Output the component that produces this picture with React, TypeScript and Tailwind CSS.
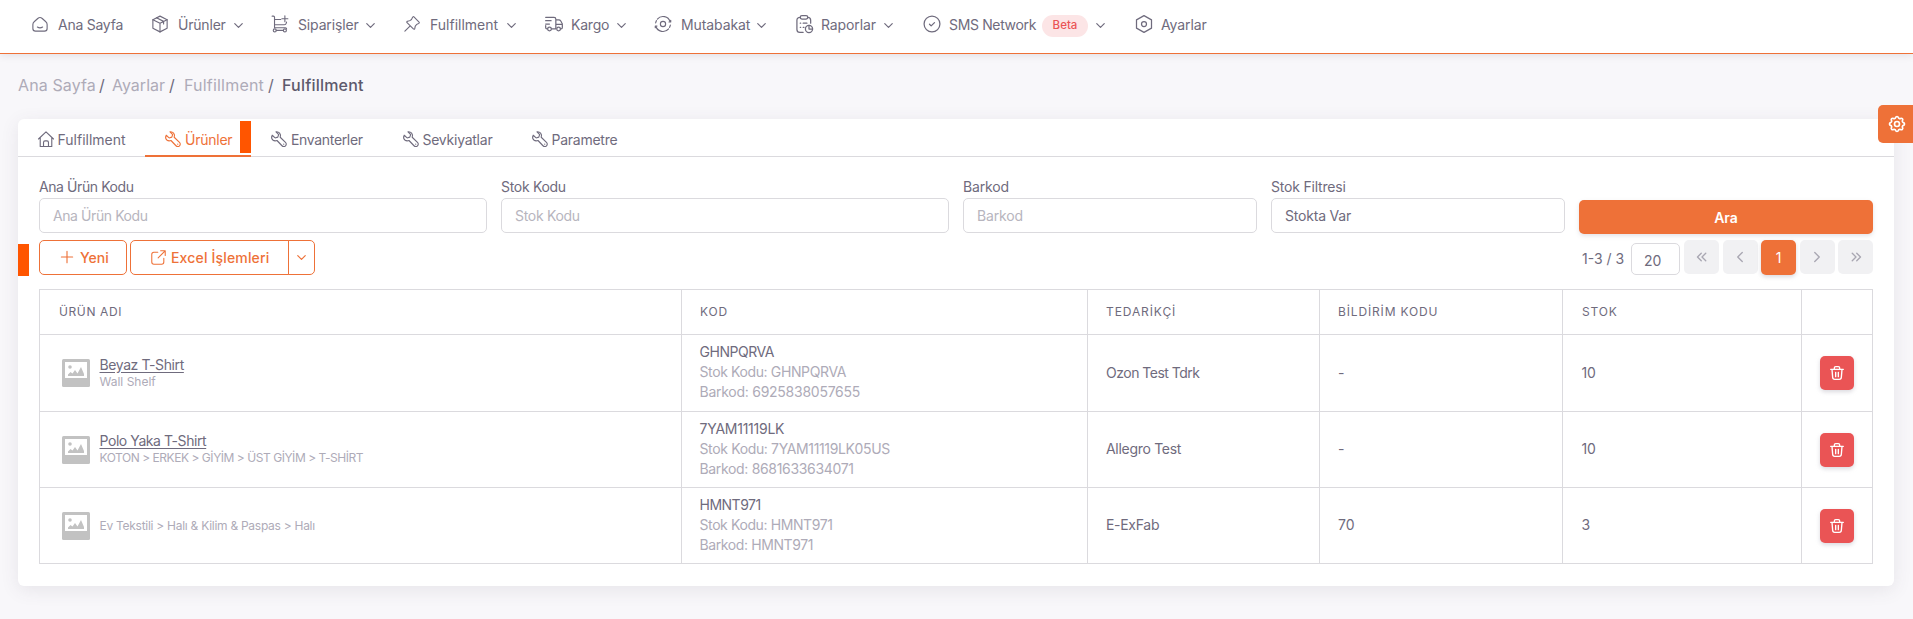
import React from 'react';

type IconProps = { className?: string };

function Svg({ className, size = 18, children, width = 1.5 }: { className?: string; size?: number; width?: number; children: React.ReactNode }) {
  return (
    <svg
      className={className}
      width={size}
      height={size}
      viewBox="0 0 24 24"
      fill="none"
      stroke="currentColor"
      strokeWidth={width}
      strokeLinecap="round"
      strokeLinejoin="round"
    >
      {children}
    </svg>
  );
}

const HomeSmile = () => (
  <Svg>
    <path d="M2.500 12.600c0-1.500.5-2.600 1.700-3.600l4.800-4.300c1.800-1.600 4.200-1.600 6 0l4.800 4.300c1.200 1 1.700 2.100 1.700 3.600v5.400c0 2.400-1.100 3.500-3.500 3.500H6c-2.400 0-3.500-1.100-3.500-3.500z" />
    <path d="M8.500 16c2 1.300 5 1.300 7 0" />
  </Svg>
);
const Box = () => (
  <Svg>
    <path d="M12 1.500l9.500 4.700v11.600L12 22.500l-9.500-4.700V6.200z" />
    <path d="M2.500 6.200L12 11l9.500-4.800M12 11v11.500M7.300 3.800l9.500 4.700v3.500" />
  </Svg>
);
const CartPlus = () => (
  <Svg>
    <path d="M1.500 1.500h1.700c1 0 1.500.5 1.500 1.500v14M4.700 6H13M4.700 13h13c1.500 0 2.300-.6 2.600-2l.4-1.500M4.700 17h14.500c1 0 1.600.5 1.600 1.500M18.500 1v8M14.500 5h8" />
    <circle cx="5" cy="20.500" r="2" />
    <circle cx="18.500" cy="20.500" r="2" />
    <path d="M7 20.500h9.500" />
  </Svg>
);
const Pin = () => (
  <Svg>
    <path d="M14.600 2.600l6.800 6.800c.7.700.3 1.600-.6 1.900-2 .5-3.300 1.600-4.300 3.500-.7 1.300-.4 2.500-1 3.700-.4.700-1.100.7-1.700.1L5.400 10.200c-.6-.6-.6-1.300.1-1.700 1.200-.6 2.400-.3 3.700-1 1.900-1 3-2.300 3.500-4.300.3-.9 1.200-1.300 1.900-.6zM9.300 14.700L2.500 21.500" />
  </Svg>
);
const Truck = () => (
  <Svg size={20}>
    <path d="M2 4h10c1.500 0 2.200.7 2.200 2.200v11.600H9M2 8h6.500M2 12h4.500M2 14v2.200c0 1 .6 1.600 1.500 1.600h.8M14.200 7h3.600c1 0 1.600.3 2.100 1.100l1.600 2.700c.4.600.5 1.100.5 1.800v3.600c0 1-.5 1.600-1.500 1.600h-.8M14.200 12.500h7.600" />
    <circle cx="6.600" cy="18" r="2.200" />
    <circle cx="17.500" cy="18" r="2.200" />
  </Svg>
);
const Cycle = () => (
  <Svg>
    <circle cx="12" cy="12" r="3.500" />
    <path d="M4.500 5.500a9.900 9.900 0 0 1 17 3.500M19.500 18.500A9.900 9.900 0 0 1 2.500 15M2.200 10.500a9.900 9.900 0 0 1 1.100-3M21.800 13.500a9.900 9.900 0 0 1-1.100 3M22.300 7v2.300H20M1.700 17v-2.300H4" />
  </Svg>
);
const Report = () => (
  <Svg size={20}>
    <path d="M7.500 4C4.500 4 3.500 5 3.500 7.500v11C3.500 21 4.500 22 7 22h4M16.500 4c2.500 0 3.500 1 3.500 3.500V11" />
    <rect x="7.500" y="2" width="9" height="4" rx="2" />
    <path d="M7.500 11H8M11 11h4.500M7.500 16H8M11 16h1" />
    <circle cx="18" cy="18" r="4.300" />
    <path d="M18 13.700V18h4.300" />
  </Svg>
);
const CheckCircle = () => (
  <Svg size={20}>
    <circle cx="12" cy="12" r="9.500" />
    <path d="M9 12.300l2 2 4-4" />
  </Svg>
);
const HexSetting = () => (
  <Svg size={20}>
    <path d="M12 2l9 5v10l-9 5-9-5V7z" />
    <circle cx="12" cy="12" r="3" />
  </Svg>
);
const House = () => (
  <Svg width={1.500}>
    <path d="M2 12L12 2.500 22 12M4.300 10v12h15.400V10M8.700 22v-5.500c0-1.300.7-2 2-2h2.600c1.300 0 2 .7 2 2V22" />
  </Svg>
);
const Wrench = () => (
  <Svg width={1.500}>
    <path d="M8 2.400L11 5.500c.4.400.5.800.3 1.400l-.9 2.600-2.600.9c-.6.2-1 .1-1.400-.3L3 7C1.500 9.800 2.300 12 3.800 13.300c1.700 1.400 3.800 1.400 5.500.700l6.700 7c1.300 1.400 3.400 1.400 4.700.1 1.300-1.300 1.300-3.400-.1-4.700l-7-6.700c.7-1.900.5-3.900-.8-5.500C11.500 2.700 9.700 2.200 8 2.400z" />
    <path d="M18.300 18.800v.1" />
  </Svg>
);
const External = () => (
  <Svg size={17}>
    <path d="M11 4.500H5.500C3.500 4.500 2.500 5.500 2.500 7.500v11c0 2 1 3 3 3h11c2 0 3-1 3-3V13M15 2.500h6.500V9M21 3l-9.500 9.500" />
  </Svg>
);
const Gear = () => (
  <Svg size={20} width={2}>
    <path d="M10.325 4.317c.426 -1.756 2.924 -1.756 3.350 0a1.724 1.724 0 0 0 2.573 1.066c1.543 -.94 3.310 .826 2.370 2.370a1.724 1.724 0 0 0 1.065 2.572c1.756 .426 1.756 2.924 0 3.350a1.724 1.724 0 0 0 -1.066 2.573c.94 1.543 -.826 3.310 -2.370 2.370a1.724 1.724 0 0 0 -2.572 1.065c-.426 1.756 -2.924 1.756 -3.350 0a1.724 1.724 0 0 0 -2.573 -1.066c-1.543 .94 -3.310 -.826 -2.370 -2.370a1.724 1.724 0 0 0 -1.065 -2.572c-1.756 -.426 -1.756 -2.924 0 -3.350a1.724 1.724 0 0 0 1.066 -2.573c-.94 -1.543 .826 -3.310 2.370 -2.370c1 .608 2.296 .07 2.572 -1.065z" />
    <circle cx="12" cy="12" r="3" />
  </Svg>
);
const Trash = () => (
  <Svg size={16} width={2}>
    <path d="M2.500 6.500h19M4.500 6.500l1 12c.1 2 1.200 3 3 3h7c1.800 0 2.900-1 3-3l1-12M8 6V4.500C8 3.300 8.700 2.500 10 2.500h4c1.300 0 2 .8 2 2V6M10 11v6.500M14 11v6.500" />
  </Svg>
);
const Down = ({ className }: IconProps) => (
  <Svg size={15} width={1.900} className={className}>
    <path d="M6 9l6 6 6-6" />
  </Svg>
);
const Placeholder = () => (
  <svg width="28" height="28" viewBox="0 0 28 28" fill="none">
    <rect width="28" height="28" rx="1.500" fill="#c2c2c2" />
    <rect x="3" y="3" width="22" height="16" fill="#fff" />
    <circle cx="8" cy="8" r="1.800" fill="#c2c2c2" />
    <path d="M6 17v-1.500L8.500 13l2 1.500L13 11l2.500 3.500L19 8l3 7v2z" fill="#c2c2c2" />
  </svg>
);

const navItems = [
  { label: 'Ana Sayfa', icon: <HomeSmile />, box: 'w-[120px]', text: 'w-[62px] tracking-[-0.25px]', down: false },
  { label: 'Ürünler', icon: <Box />, box: 'w-[120px]', text: 'w-[53px] tracking-[-0.2px]', down: true },
  { label: 'Siparişler', icon: <CartPlus />, box: 'w-[132px]', text: 'w-[65px] tracking-[-0.15px]', down: true },
  { label: 'Fulfillment', icon: <Pin />, box: 'w-[141px]', text: 'w-[74px]', down: true },
  { label: 'Kargo', icon: <Truck />, box: 'w-[110px]', text: 'w-[43px] tracking-[-0.2px]', down: true },
  { label: 'Mutabakat', icon: <Cycle />, box: 'w-[140px]', text: 'w-[73px] tracking-[-0.1px]', down: true },
  { label: 'Raporlar', icon: <Report />, box: 'w-[128px]', text: 'w-[60px] tracking-[-0.1px]', down: true },
  { label: 'SMS Network', icon: <CheckCircle />, box: 'w-[212px]', text: 'w-[93px] tracking-[-0.35px]', down: true, badge: 'Beta' },
  { label: 'Ayarlar', icon: <HexSetting />, box: 'w-[80px]', text: 'w-[50px] tracking-[-0.1px]', down: false },
];

const tabs = [
  { label: 'Fulfillment', icon: <House />, cls: 'w-[127px] pl-[18.5px]', active: false },
  { label: 'Ürünler', icon: <Wrench />, cls: 'w-[106px] pl-[19px] text-[#ee7138] border-b-2 border-[#ee7138] tracking-[-0.25px]', active: true },
  { label: 'Envanterler', icon: <Wrench />, cls: 'w-[132px] pl-[19px] tracking-[-0.33px]', active: false },
  { label: 'Sevkiyatlar', icon: <Wrench />, cls: 'w-[129px] pl-[18.500px] tracking-[-0.25px]', active: false },
  { label: 'Parametre', icon: <Wrench />, cls: 'w-[120px] pl-[18.500px] tracking-[-0.25px]', active: false },
];

const rows = [
  {
    name: 'Beyaz T-Shirt', nameCls: 'tracking-[-0.4px]', cat: 'Wall Shelf', catCls: '',
    code: 'GHNPQRVA', codeCls: 'tracking-[-0.45px]', stock: 'GHNPQRVA', stockCls: 'tracking-[-0.38px]', barcode: '6925838057655', barCls: 'tracking-[-0.26px]',
    supplier: 'Ozon Test Tdrk', supCls: 'tracking-[-0.5px]', notify: '-', qty: '10', h: 'h-[77px]',
  },
  {
    name: 'Polo Yaka T-Shirt', nameCls: 'tracking-[-0.43px]', cat: 'KOTON > ERKEK > GİYİM > ÜST GİYİM > T-SHİRT', catCls: 'tracking-[-0.46px]',
    code: '7YAM11119LK', codeCls: 'tracking-[-0.25px]', stock: '7YAM11119LK05US', stockCls: 'tracking-[-0.36px]', barcode: '8681633634071', barCls: 'tracking-[-0.33px]',
    supplier: 'Allegro Test', supCls: 'tracking-[-0.3px]', notify: '-', qty: '10', h: 'h-[76px]',
  },
  {
    name: '', nameCls: '', cat: 'Ev Tekstili > Halı & Kilim & Paspas > Halı', catCls: 'tracking-[-0.27px]',
    code: 'HMNT971', codeCls: 'tracking-[-0.5px]', stock: 'HMNT971', stockCls: 'tracking-[-0.4px]', barcode: 'HMNT971', barCls: 'tracking-[-0.4px]',
    supplier: 'E-ExFab', supCls: 'tracking-[-0.3px]', notify: '70', qty: '3', h: 'h-[76px]',
  },
];

const heads = [
  { label: 'ÜRÜN ADI', cls: 'pl-[19px] tracking-[0.6px]' },
  { label: 'KOD', cls: 'tracking-[0.8px]' },
  { label: 'TEDARİKÇİ', cls: 'tracking-[0.9px]' },
  { label: 'BİLDİRİM KODU', cls: 'tracking-[0.85px]' },
  { label: 'STOK', cls: 'pl-[19px] tracking-[0.8px]' },
  { label: '', cls: '' },
];

function Field({ label, value, cls, filled = false }: { label: string; value: string; cls: string; filled?: boolean }) {
  return (
    <div className={cls}>
      <div className="h-[21px] leading-[20px]">{label}</div>
      <div className={`flex h-[35px] items-center rounded-[5px] border border-[#dbdade] px-[13px] pb-[1px] ${filled ? 'text-[#6f6b7d]' : 'text-[#b7b5be]'}`}>
        {value}
      </div>
    </div>
  );
}

function PageButton({ children }: { children: React.ReactNode }) {
  return <button className="flex h-[34px] w-[35px] items-center justify-center rounded-[5px] bg-[#f1f1f3] text-[#a9a7b2]">{children}</button>;
}

const cell = 'border-r border-b border-[#dbdade] text-left align-middle';

export default function App() {
  return (
    <div className="relative h-[619px] w-full overflow-hidden bg-[#f8f7fa] font-['Inter',sans-serif] text-[14px] text-[#6f6b7d]">
      <nav className="relative flex h-[54px] items-start border-b border-[#ee7138] bg-white pt-[11px] pl-[31px] shadow-[0_1px_8px_rgba(47,43,61,0.12)]">
        {navItems.map((n) => (
          <div key={n.label} className={`flex h-[26px] shrink-0 items-center ${n.box}`}>
            <span className="flex w-[27px] shrink-0 items-center">{n.icon}</span>
            <span className={`shrink-0 whitespace-nowrap ${n.text}`}>{n.label}</span>
            {n.badge && (
              <span className="mt-[4px] mr-[5px] flex h-[22px] w-[46px] shrink-0 items-center justify-center rounded-full bg-[#fce5e6] text-[11.5px] font-medium text-[#ea5455]">
                {n.badge}
              </span>
            )}
            {n.down && <Down className="mt-[3px] shrink-0" />}
          </div>
        ))}
      </nav>

      <div className="flex h-[65px] items-center pb-[4px] pl-[18px] text-[16px] text-[#aeabb8]">
        <span className="w-[81px] tracking-[0.12px]">Ana Sayfa</span>
        <span className="w-[13px] text-[#6f6b7d]">/</span>
        <span className="w-[57px]">Ayarlar</span>
        <span className="w-[15px] text-[#6f6b7d]">/</span>
        <span className="w-[84px] tracking-[0.2px]">Fulfillment</span>
        <span className="w-[14px] text-[#6f6b7d]">/</span>
        <span className="font-medium tracking-[0.2px] text-[#5d596c]">Fulfillment</span>
      </div>

      <main className="relative ml-[18px] h-[467px] w-[1876px] rounded-[6px] bg-white shadow-[0_4px_18px_rgba(75,70,92,0.1)]">
        <div className="relative flex h-[38px] border-b border-[#dbdade]">
          {tabs.map((t) => (
            <div key={t.label} className={`relative flex h-[38px] shrink-0 items-center ${t.cls} ${t.active ? 'pt-[4px]' : 'pt-[2px]'}`}>
              <span className="w-[21px] shrink-0">{t.icon}</span>
              <span className="whitespace-nowrap">{t.label}</span>
              {t.active && <span className="absolute top-[2px] right-0 h-[32px] w-[11px] bg-[#ff5500]" />}
            </div>
          ))}
        </div>
        <span className="absolute top-[125px] left-0 h-[32px] w-[11px] bg-[#ff5500]" />

        <div className="px-[21px] pt-[20px]">
          <div className="flex h-[58px] gap-[14px]">
            <Field label="Ana Ürün Kodu" value="Ana Ürün Kodu" cls="w-[448px] tracking-[-0.42px]" />
            <Field label="Stok Kodu" value="Stok Kodu" cls="w-[448px] tracking-[-0.3px]" />
            <Field label="Barkod" value="Barkod" cls="w-[294px] tracking-[-0.15px]" />
            <Field label="Stok Filtresi" value="Stokta Var" cls="w-[294px] tracking-[-0.2px]" filled />
            <button className="mt-[23px] h-[34px] w-[294px] rounded-[5px] bg-[#ee7138] font-semibold text-white shadow-[0_2px_4px_rgba(165,163,174,0.3)]">Ara</button>
          </div>

          <div className="mt-[5px] flex h-[49px] items-start justify-between font-medium text-[#ee7138]">
            <div className="flex gap-[3px]">
              <button className="flex h-[35px] w-[88px] items-center rounded-[5px] border border-[#ee7138] pb-[1px] pl-[18px]">
                <Svg size={18}>
                  <path d="M12 4.500v15M4.500 12h15" />
                </Svg>
                <span className="ml-[4px]">Yeni</span>
              </button>
              <div className="flex">
                <button className="flex h-[35px] w-[159px] items-center rounded-l-[5px] border border-[#ee7138] pb-[1px] pl-[19px]">
                  <External />
                  <span className="ml-[4px] tracking-[0.17px]">Excel İşlemleri</span>
                </button>
                <button className="-ml-px flex h-[35px] w-[27px] items-center justify-center rounded-r-[5px] border border-[#ee7138]">
                  <Down />
                </button>
              </div>
            </div>
            <div className="flex font-normal text-[#6f6b7d]">
              <span className="mt-[8px] w-[49px] whitespace-nowrap">1-3 / 3</span>
              <span className="mt-[3px] mr-[4px] flex h-[32px] w-[49px] items-center rounded-[5px] border border-[#dbdade] pt-[2px] pl-[12px]">20</span>
              <div className="flex gap-[3.500px]">
                <PageButton><Svg size={18} width={1.800}><path d="M11 7l-5 5 5 5M17 7l-5 5 5 5" /></Svg></PageButton>
                <PageButton><Svg size={18} width={1.800}><path d="M15 6l-6 6 6 6" /></Svg></PageButton>
                <button className="h-[35px] w-[35px] rounded-[5px] bg-[#ee7138] text-white shadow-[0_2px_4px_rgba(165,163,174,0.4)]">1</button>
                <PageButton><Svg size={18} width={1.800}><path d="M9 6l6 6-6 6" /></Svg></PageButton>
                <PageButton><Svg size={18} width={1.800}><path d="M7 7l5 5-5 5M13 7l5 5-5 5" /></Svg></PageButton>
              </div>
            </div>
          </div>

          <table className="w-[1834px] table-fixed border-separate border-spacing-0 border-t border-l border-[#dbdade]">
            <colgroup>
              <col className="w-[642px]" />
              <col className="w-[406px]" />
              <col className="w-[232px]" />
              <col className="w-[243px]" />
              <col className="w-[239px]" />
              <col className="w-[71px]" />
            </colgroup>
            <thead>
              <tr className="h-[45px]">
                {heads.map((h, i) => (
                  <th key={i} className={`${cell} p-0 pb-[1px] pl-[18px] text-[12px] font-normal ${h.cls}`}>{h.label}</th>
                ))}
              </tr>
            </thead>
            <tbody>
              {rows.map((r) => (
                <tr key={r.code} className={r.h}>
                  <td className={`${cell} p-0 pl-[18px]`}>
                    <div className="flex items-center pl-[4px]">
                      <Placeholder />
                      <div className="ml-[9.500px] pb-[1px] leading-[17px]">
                        {r.name && <div className={`underline underline-offset-2 ${r.nameCls}`}>{r.name}</div>}
                        <div className={`text-[12px] text-[#aeabb8] ${r.catCls}`}>{r.cat}</div>
                      </div>
                    </div>
                  </td>
                  <td className={`${cell} p-0 pb-[2px] pl-[17.500px] leading-[20px]`}>
                    <div className={r.codeCls}>{r.code}</div>
                    <div className={`text-[#aeabb8] ${r.stockCls}`}>Stok Kodu: {r.stock}</div>
                    <div className={`text-[#aeabb8] ${r.barCls}`}>Barkod: {r.barcode}</div>
                  </td>
                  <td className={`${cell} p-0 pb-[2px] pl-[18px] ${r.supCls}`}>{r.supplier}</td>
                  <td className={`${cell} p-0 pb-[2px] pl-[18px]`}>{r.notify}</td>
                  <td className={`${cell} p-0 pb-[2px] pl-[18.500px] tracking-[-0.3px]`}>{r.qty}</td>
                  <td className={`${cell} p-0 pl-[18px]`}>
                    <button className="flex h-[34px] w-[34px] items-center justify-center rounded-[5px] bg-[#ea5455] text-white shadow-[0_2px_4px_rgba(165,163,174,0.4)]">
                      <Trash />
                    </button>
                  </td>
                </tr>
              ))}
            </tbody>
          </table>
        </div>
      </main>

      <button className="absolute top-[105px] right-0 flex h-[38px] w-[35px] items-center justify-center rounded-l-[5px] bg-[#ee7138] pl-[2px] text-white">
        <Gear />
      </button>
    </div>
  );
}
